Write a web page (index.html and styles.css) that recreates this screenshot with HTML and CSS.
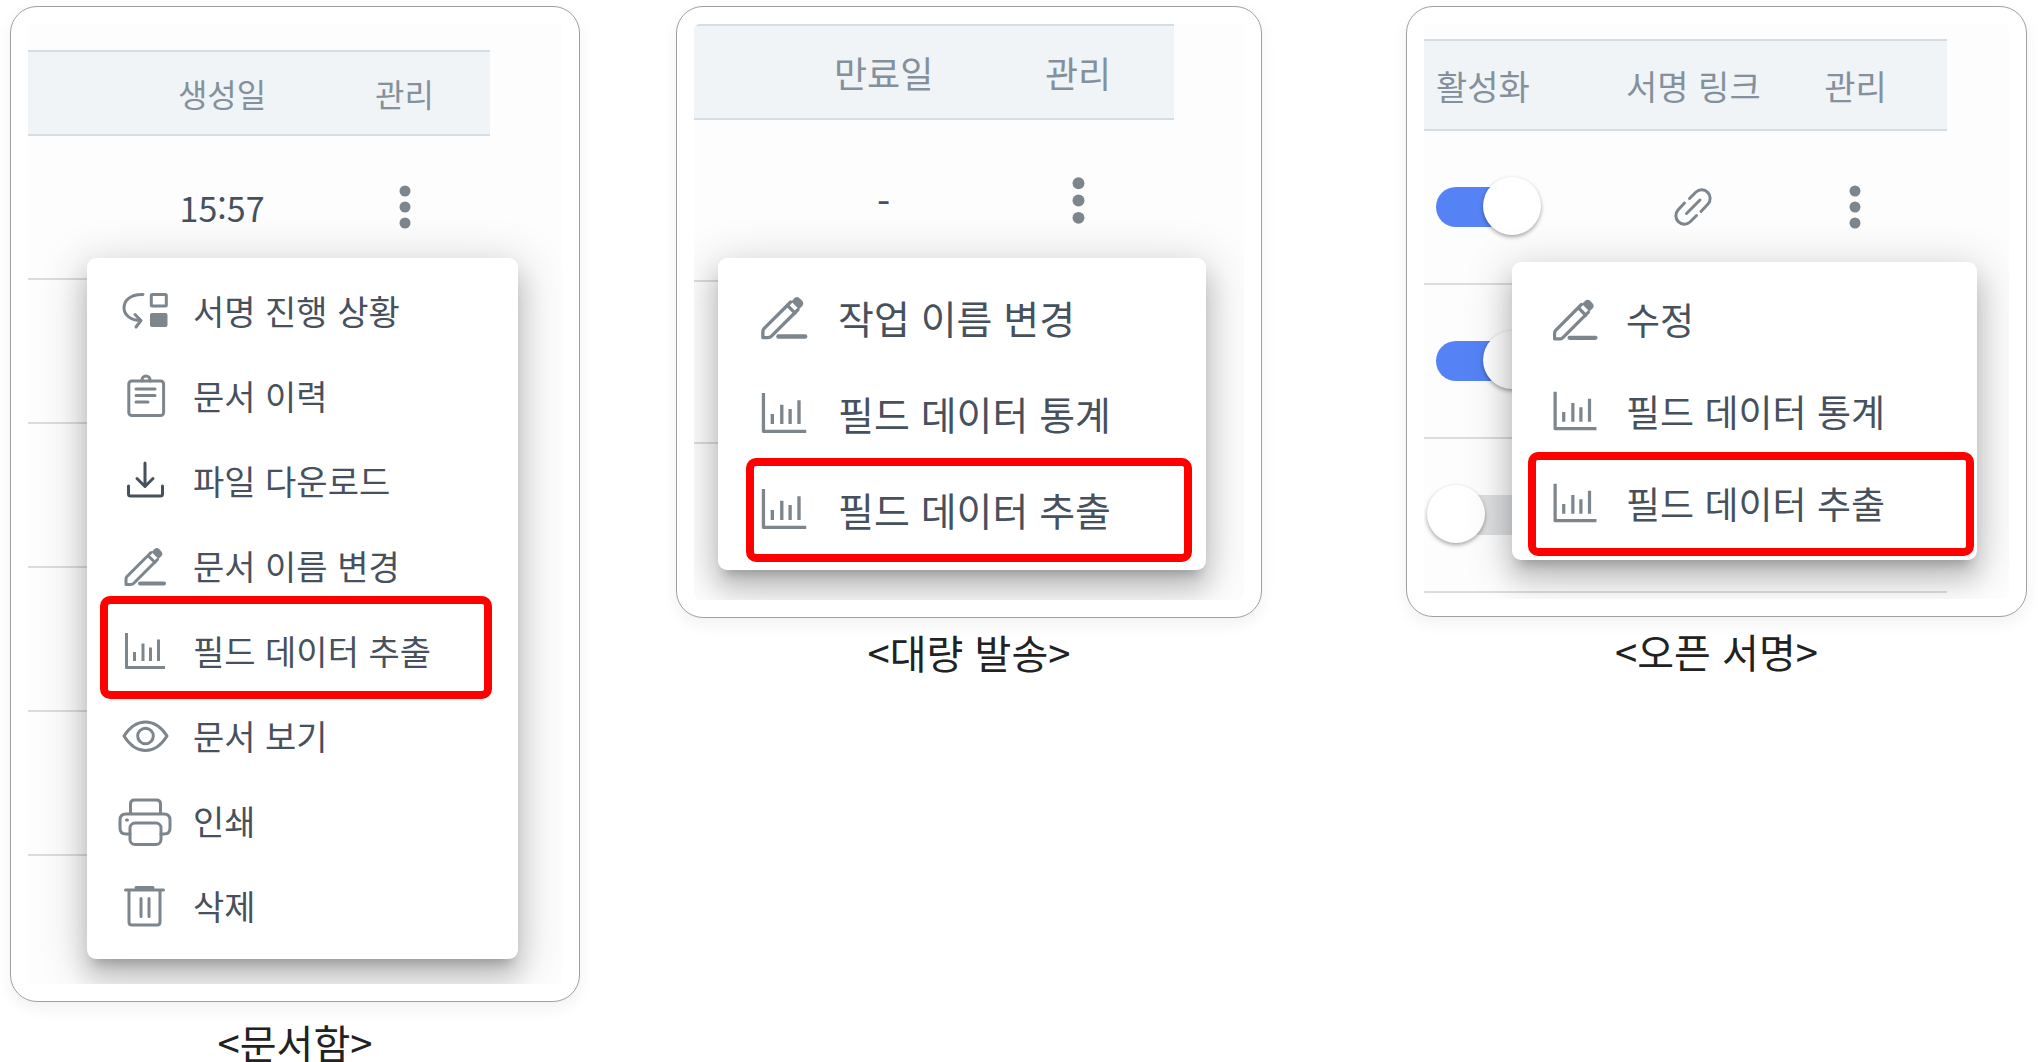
FILE: index.html
```
<!DOCTYPE html>
<html lang="ko">
<head>
<meta charset="UTF-8">
<meta name="viewport" content="width=device-width, initial-scale=1.0">
<title>필드 데이터 추출</title>
<link rel="stylesheet" href="styles.css">
</head>
<body>
<svg class="sprite" aria-hidden="true">
<symbol id="i-progress" viewBox="0 0 54 54"><path d="M25 10.500C12 10 6 17 6 24s7 12.500 16.500 12.500M17 30.500l6 6-5 6.500"/><rect x="33.300" y="10.500" width="15" height="11.500" rx="1"/><rect class="solid" x="32" y="29" width="17.500" height="14" rx="2"/></symbol>
<symbol id="i-history" viewBox="0 0 54 54"><rect x="10.800" y="12" width="34.800" height="34.500" rx="3"/><path d="M24 12v-1a4 4 0 0 1 8 0v1M18 20h19M18 26.500h19M18 33h12"/></symbol>
<symbol id="i-download" viewBox="0 0 54 54"><path d="M27 9v23M19 24.500l8 8 8-8M10.500 32v8q0 2 2 2h30q2 0 2-2v-8"/></symbol>
<symbol id="i-pencil" viewBox="0 0 54 54"><path d="M33 13.500L9 37.500q-1 1-1 2.500v5.500h4.500q2 0 3-1L39.500 20.500M30 16.500l7 7"/><path class="solid" d="M33.500 13l3-3q2.500-2 5 .5l1.500 1.500q2.500 2.500.5 5l-3 3z"/><path class="thick" d="M22 44.500h24"/></symbol>
<symbol id="i-chart" viewBox="0 0 54 54"><path class="axis" d="M8.500 9v34.500H47M16.500 28v9M25 19.500V37M32.500 23.500V37M40.500 15.500V37"/></symbol>
<symbol id="i-eye" viewBox="0 0 54 54"><path d="M6 27Q15 13 27.500 13T49 27Q40 41.500 27.500 41.500T6 27z"/><circle cx="27.500" cy="27" r="7.800"/></symbol>
<symbol id="i-print" viewBox="0 0 54 54"><path d="M12.500 19.500V10q0-4 4-4h22q4 0 4 4v9.500M12 40H8q-6 0-6-6v-8q0-6 6-6h38q6 0 6 6v8q0 6-6 6h-3"/><rect x="12" y="29" width="31" height="21.500" rx="5"/><path d="M8.500 26h1"/></symbol>
<symbol id="i-trash" viewBox="0 0 54 54"><path d="M7.500 11h38M11 11v32q0 3 3 3h25q3 0 3-3V11M23 19.500v18M31 19.500v18M18 8.500h17"/></symbol>
<symbol id="i-kebab" viewBox="0 0 12 44"><circle class="solid" cx="6" cy="6" r="5.500"/><circle class="solid" cx="6" cy="22" r="5.500"/><circle class="solid" cx="6" cy="38" r="5.500"/></symbol>
<symbol id="i-link" viewBox="0 0 40 40"><path d="M16.500 11.500l6.500-6.500a8.500 8.500 0 0 1 12 12l-7 7.500M23.500 28.500L17 35A8.500 8.500 0 0 1 5 23l6.500-7M13.500 26.500L27 13"/></symbol>
</svg>

<main class="page">
<figure class="panel box-docs">
<div class="frame"><div class="screen">
<table>
<thead><tr><td class="blank"></td><th>생성일</th><th class="manage">관리</th></tr></thead>
<tbody>
<tr><td></td><td>15:57</td><td><button class="kebab" aria-label="관리"><svg><use href="#i-kebab"/></svg></button></td></tr>
<tr><td colspan="3"></td></tr>
<tr><td colspan="3"></td></tr>
<tr><td colspan="3"></td></tr>
<tr><td colspan="3"></td></tr>
<tr class="last"><td colspan="3"></td></tr>
</tbody>
</table>
<ul class="menu">
<li><button><svg><use href="#i-progress"/></svg>서명 진행 상황</button></li>
<li><button><svg><use href="#i-history"/></svg>문서 이력</button></li>
<li><button><svg class="dark"><use href="#i-download"/></svg>파일 다운로드</button></li>
<li><button><svg><use href="#i-pencil"/></svg>문서 이름 변경</button></li>
<li class="marked"><button><svg><use href="#i-chart"/></svg>필드 데이터 추출</button></li>
<li><button><svg><use href="#i-eye"/></svg>문서 보기</button></li>
<li><button><svg><use href="#i-print"/></svg>인쇄</button></li>
<li><button><svg><use href="#i-trash"/></svg>삭제</button></li>
</ul>
</div></div>
<figcaption>&lt;문서함&gt;</figcaption>
</figure>

<figure class="panel box-bulk">
<div class="frame"><div class="screen">
<table>
<thead><tr><td class="blank"></td><th>만료일</th><th class="manage">관리</th></tr></thead>
<tbody>
<tr><td></td><td>-</td><td><button class="kebab" aria-label="관리"><svg><use href="#i-kebab"/></svg></button></td></tr>
<tr><td colspan="3"></td></tr>
<tr class="last"><td colspan="3"></td></tr>
</tbody>
</table>
<ul class="menu">
<li><button><svg><use href="#i-pencil"/></svg>작업 이름 변경</button></li>
<li><button><svg><use href="#i-chart"/></svg>필드 데이터 통계</button></li>
<li class="marked"><button><svg><use href="#i-chart"/></svg>필드 데이터 추출</button></li>
</ul>
</div></div>
<figcaption>&lt;대량 발송&gt;</figcaption>
</figure>

<figure class="panel box-open">
<div class="frame"><div class="screen">
<table>
<thead><tr><th class="active">활성화</th><th class="link">서명 링크</th><th class="manage">관리</th></tr></thead>
<tbody>
<tr><td class="active"><input type="checkbox" class="switch" aria-label="활성화" checked></td><td><a class="sign-link" href="#" aria-label="서명 링크"><svg><use href="#i-link"/></svg></a></td><td><button class="kebab" aria-label="관리"><svg><use href="#i-kebab"/></svg></button></td></tr>
<tr><td class="active"><input type="checkbox" class="switch" aria-label="활성화" checked></td><td></td><td></td></tr>
<tr><td class="active"><input type="checkbox" class="switch" aria-label="활성화"></td><td></td><td></td></tr>
</tbody>
</table>
<ul class="menu">
<li><button><svg><use href="#i-pencil"/></svg>수정</button></li>
<li><button><svg><use href="#i-chart"/></svg>필드 데이터 통계</button></li>
<li class="marked"><button><svg><use href="#i-chart"/></svg>필드 데이터 추출</button></li>
</ul>
</div></div>
<figcaption>&lt;오픈 서명&gt;</figcaption>
</figure>
</main>
</body>
</html>
```
FILE: styles.css
```
* {box-sizing: border-box;margin: 0;padding: 0;}
body {background: #fff;color: #47515d;font-family: "Noto Sans CJK KR", sans-serif;}
button {font: inherit;color: inherit;background: none;border: none;cursor: pointer;}
svg {fill: none;stroke: #7d858d;stroke-width: 3;stroke-linecap: round;stroke-linejoin: round;}
.sprite {display: none;}
.solid {fill: #7d858d;stroke: none;}
.thick {stroke-width: 4;}
.axis {stroke-width: 3;stroke-linecap: butt;}
.dark {stroke: #47515d;}

.page {display: flex;align-items: flex-start;padding: 6px 11px 0 10px;}
.frame {padding: 17px;border: 1px solid #a0a0a0;border-radius: 27px;background: #fff;box-shadow: 0 6px 16px rgba(0, 0, 0, 0.06);}
.screen {position: relative;overflow: hidden;border-radius: 6px;background: #fdfdfd;}
figcaption {margin-top: 14px;font-size: 40px;line-height: 40px;text-align: center;color: #222;}

/* tables */
table {border-collapse: separate;border-spacing: 0;table-layout: fixed;}
thead th, thead td {background: #f0f4f7;border-top: 2px solid #d3dde3;border-bottom: 2px solid #d3dde3;font-weight: 400;color: #84919c;white-space: nowrap;}
tbody td {border-bottom: 2px solid #dcdcdc;text-align: center;}
.last td {border-bottom: none;}
.kebab {display: block;margin: 0 auto;}
.kebab svg {display: block;width: 12px;height: 44px;}

/* dropdown menu */
.menu {position: absolute;list-style: none;border-radius: 9px;background: #fff;box-shadow: 0 11px 11px -7px rgba(0, 0, 0, 0.2), 0 18px 24px 2px rgba(0, 0, 0, 0.14), 0 9px 44px 7px rgba(0, 0, 0, 0.16);}
.menu li {position: relative;}
.menu button {display: flex;align-items: center;width: 100%;height: 100%;text-align: left;white-space: nowrap;}
.marked::after {content: "";position: absolute;border: 8px solid #f00;border-radius: 10px;pointer-events: none;}

/* document box */
.box-docs {flex: 570 1 0;}
.box-docs .screen {padding-top: 26px;}
.box-docs figcaption {margin-top: 20px;}
.box-docs table {width: calc(100% - 72px);font-size: 34px;}
.box-docs th {height: 86px;font-size: 32px;}
.box-docs .blank {width: 21%;}
.box-docs .manage {width: 37%;}
.box-docs tbody td {height: 144px;}
.box-docs .last td {height: 128px;}
.box-docs .menu {left: 59px;right: 44px;top: 234px;padding: 10px 0 11px;font-size: 34px;}
.box-docs .menu li {height: 85px;}
.box-docs .menu button {gap: 21px;padding-left: 31px;}
.box-docs .menu svg {width: 54px;height: 54px;}
.box-docs .marked::after {inset: -12px 26px -6px 13px;}

/* bulk send */
.box-bulk {flex: 586 1 0;margin: 0 144px 0 96px;}
.box-bulk table {width: calc(100% - 70px);font-size: 38px;}
.box-bulk th {height: 96px;font-size: 36px;}
.box-bulk .blank {width: 19%;}
.box-bulk .manage {width: 40%;}
.box-bulk tbody td {height: 162px;}
.box-bulk .last td {height: 156px;}
.box-bulk .kebab svg {width: 13px;height: 49px;}
.box-bulk .menu {left: 24px;right: 38px;top: 234px;padding: 11px 0 13px;font-size: 39px;}
.box-bulk .menu li {height: 96px;}
.box-bulk .menu button {gap: 24px;padding-left: 36px;}
.box-bulk .menu svg {width: 60px;height: 60px;}
.box-bulk .marked::after {inset: -3px 14px -5px 28px;}

/* open sign */
.box-open {flex: 621 1 0;}
.box-open .screen {padding: 15px 0 6px;}
.box-open table {width: calc(100% - 62px);}
.box-open th {height: 92px;font-size: 34px;}
.box-open .active {width: 38%;padding-left: 12px;text-align: left;}
.box-open .link {width: 27%;}
.box-open tbody td {height: 154px;}
.box-open .kebab svg {width: 12px;height: 46px;}
.box-open .menu {left: 88px;right: 32px;top: 238px;padding: 11px 0;font-size: 37px;}
.box-open .menu li {height: 92px;}
.box-open .menu button {gap: 22px;padding-left: 34px;}
.box-open .menu svg {width: 58px;height: 58px;}
.box-open .marked::after {inset: -5px 3px -7px 16px;}
.sign-link {display: inline-block;vertical-align: middle;}
.sign-link svg {display: block;width: 40px;height: 40px;}
.switch {appearance: none;position: relative;display: block;width: 97px;height: 40px;border-radius: 20px;background: #dfe0e2;cursor: pointer;}
.switch::before {content: "";position: absolute;top: -10px;left: -9px;width: 58px;height: 58px;border-radius: 50%;background: #fff;box-shadow: 0 2px 4px rgba(0, 0, 0, 0.35);}
.switch:checked {background: #5583f5;}
.switch:checked::before {left: 47px;}
```
